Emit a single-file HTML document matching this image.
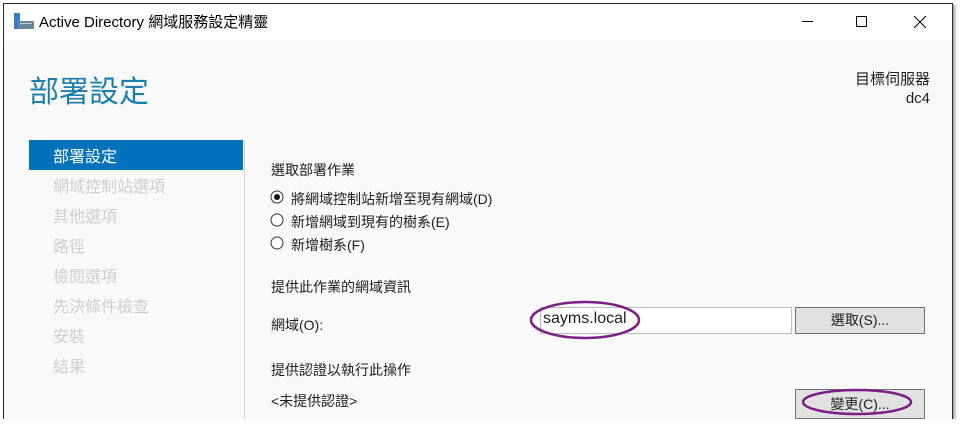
<!DOCTYPE html>
<html><head><meta charset="utf-8"><style>
*{margin:0;padding:0;box-sizing:border-box}
body{width:960px;height:425px;background:#fff;position:relative;overflow:hidden;font-family:"Liberation Sans","Noto Sans CJK TC",sans-serif;color:#1e1e1e}
.win{position:absolute;left:3px;top:3px;width:950px;height:416px;border:1px solid #2b2b2b;border-bottom:none;background:#f9f9f9;box-shadow:2px 2px 3px rgba(0,0,0,.4)}
.tb{position:absolute;left:0;top:0;width:100%;height:37px;background:#fff}
.t{position:absolute;font-size:14px;white-space:nowrap}
.nav{position:absolute;font-size:16px;color:#cfcfcf}
</style></head><body>
<div class="win">
<div class="tb">
<svg style="position:absolute;left:7px;top:7px" width="24" height="20"><rect x="3" y="2" width="6" height="16" fill="#2f7fd0"/><rect x="7" y="10" width="16" height="8" fill="#6d8596"/><rect x="9" y="12" width="12" height="1" fill="#c0ccd6"/></svg>
<div class="t" style="left:35px;top:7px;font-size:15px;color:#000">Active Directory 網域服務設定精靈</div>
<div style="position:absolute;left:798px;top:17px;width:11px;height:1px;background:#000"></div>
<div style="position:absolute;left:852px;top:12px;width:11px;height:11px;border:1px solid #000"></div>
<svg style="position:absolute;left:910px;top:12px" width="12" height="12"><path d="M0 0L12 12M12 0L0 12" stroke="#000" stroke-width="1"/></svg>
</div>
<div class="t" style="left:25px;top:63px;font-size:30px;color:#1d7fac">部署設定</div>
<div class="t" style="right:22px;top:66px;font-size:15px;text-align:right;line-height:19px">目標伺服器<br>dc4</div>
<div style="position:absolute;left:25px;top:136px;width:214px;height:30px;background:#0072bc"></div>
<div class="nav" style="top:139px;left:49px;color:#fff">部署設定</div>
<div class="nav" style="top:169px;left:49px">網域控制站選項</div>
<div class="nav" style="top:199px;left:49px">其他選項</div>
<div class="nav" style="top:229px;left:49px">路徑</div>
<div class="nav" style="top:259px;left:49px">檢閱選項</div>
<div class="nav" style="top:289px;left:49px">先決條件檢查</div>
<div class="nav" style="top:319px;left:49px">安裝</div>
<div class="nav" style="top:349px;left:49px">結果</div>
<div style="position:absolute;left:240px;top:136px;width:1px;height:280px;background:#d4d4d4"></div>
<div class="t" style="left:267px;top:156px">選取部署作業</div>
<svg style="position:absolute;left:266px;top:186px" width="14" height="14"><circle cx="7" cy="7" r="6" fill="#fff" stroke="#333"/><circle cx="7" cy="7" r="3" fill="#111"/></svg>
<div class="t" style="left:287px;top:185px">將網域控制站新增至現有網域(D)</div>
<svg style="position:absolute;left:266px;top:209px" width="14" height="14"><circle cx="7" cy="7" r="6" fill="#fff" stroke="#333"/></svg>
<div class="t" style="left:287px;top:208px">新增網域到現有的樹系(E)</div>
<svg style="position:absolute;left:266px;top:232px" width="14" height="14"><circle cx="7" cy="7" r="6" fill="#fff" stroke="#333"/></svg>
<div class="t" style="left:287px;top:231px">新增樹系(F)</div>
<div class="t" style="left:267px;top:273px">提供此作業的網域資訊</div>
<div class="t" style="left:267px;top:311px">網域(O):</div>
<div style="position:absolute;left:536px;top:303px;width:252px;height:27px;background:#fff;border:1px solid #bdbdbd"></div>
<div class="t" style="left:539px;top:306px;font-size:16px">sayms.local</div>
<div style="position:absolute;left:791px;top:303px;width:130px;height:27px;background:#e1e1e1;border:1px solid #707070;font-size:14px;text-align:center;line-height:25px">選取(S)...</div>
<div class="t" style="left:267px;top:356px">提供認證以執行此操作</div>
<div class="t" style="left:267px;top:387px">&lt;未提供認證&gt;</div>
<div style="position:absolute;left:791px;top:385px;width:130px;height:30px;background:#e1e1e1;border:1px solid #707070;font-size:14px;text-align:center;line-height:28px">變更(C)...</div>
</div>
<svg style="position:absolute;left:0;top:0" width="960" height="425"><ellipse cx="585" cy="320" rx="54" ry="18" fill="none" stroke="#7a1f84" stroke-width="2.5"/><ellipse cx="857" cy="402" rx="54" ry="12" fill="none" stroke="#7a1f84" stroke-width="2.5"/><rect x="0" y="419" width="960" height="6" fill="#fff"/></svg>
</body></html>
